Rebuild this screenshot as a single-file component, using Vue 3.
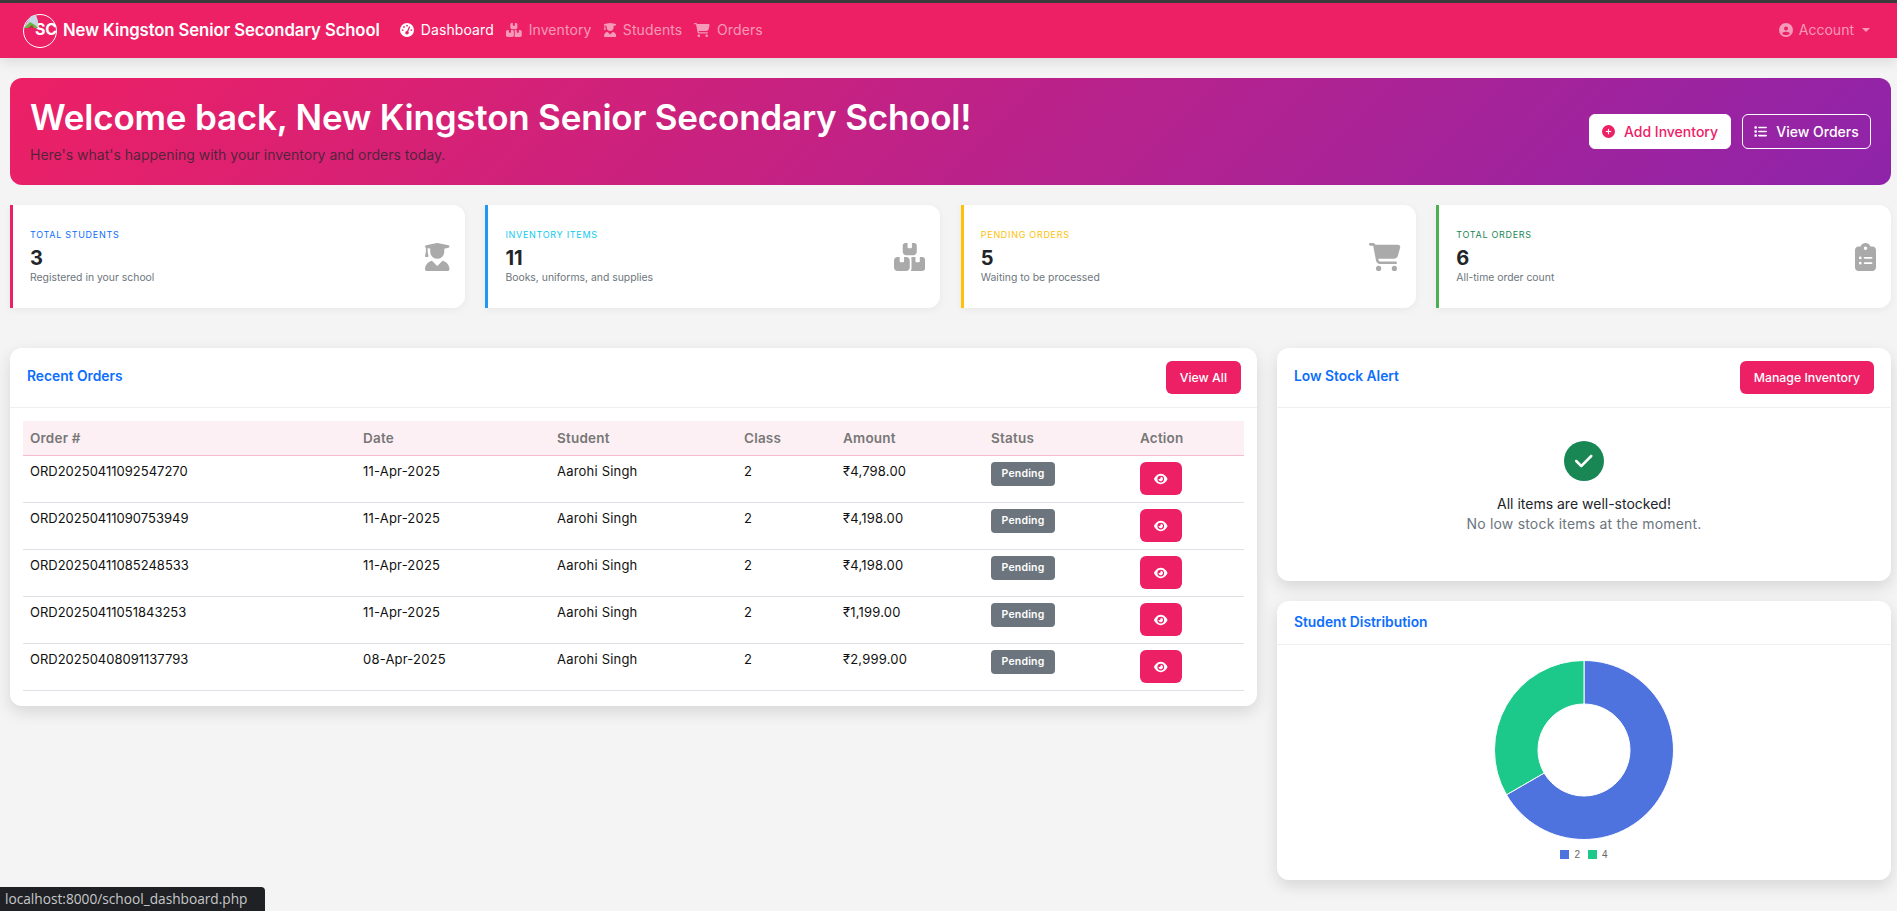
<template>
  <div class="page">
    <div class="topstrip"></div>
    <nav class="navbar">
      <a class="brand">
        <span class="logo">
          <svg class="logo-pic" viewBox="0 0 14 13">
            <path d="M0 12 L7 1 L12 0 L14 6 L14 13 L0 13Z" fill="#c9d6e8" />
            <path d="M0 13 L6 7 L11 10 L14 13Z" fill="#6cb33f" />
            <path d="M4 13 L8 10 L10 13Z" fill="#b3344a" />
          </svg>
          <span class="logo-text">SC</span>
        </span>
        New Kingston Senior Secondary School
      </a>
      <ul class="nav-links">
        <li v-for="link in navLinks" :key="link.label" :class="{ active: link.active }">
          <svg class="nav-icon" :viewBox="viewBox(link.icon)"><path :d="ICONS[link.icon].d" /></svg>
          {{ link.label }}
        </li>
      </ul>
      <div class="account">
        <svg class="nav-icon" :viewBox="viewBox('user')"><path :d="ICONS.user.d" /></svg>
        Account
        <span class="caret"></span>
      </div>
    </nav>

    <main class="content">
      <section class="hero">
        <div class="hero-text">
          <h1>Welcome back, New Kingston Senior Secondary School!</h1>
          <p>Here's what's happening with your inventory and orders today.</p>
        </div>
        <div class="hero-actions">
          <button class="btn-white">
            <svg :viewBox="viewBox('plus')"><path :d="ICONS.plus.d" /></svg>
            Add Inventory
          </button>
          <button class="btn-outline">
            <svg :viewBox="viewBox('list')"><path :d="ICONS.list.d" /></svg>
            View Orders
          </button>
        </div>
      </section>

      <section class="stats">
        <div v-for="s in stats" :key="s.label" class="stat" :style="{ borderLeftColor: s.border }">
          <div>
            <div class="stat-label" :style="{ color: s.color }">{{ s.label }}</div>
            <div class="stat-num">{{ s.value }}</div>
            <div class="stat-sub">{{ s.sub }}</div>
          </div>
          <svg class="stat-icon" :viewBox="viewBox(s.icon)"><path :d="ICONS[s.icon].d" /></svg>
        </div>
      </section>

      <section class="columns">
        <div class="card">
          <div class="card-head">
            <h2>Recent Orders</h2>
            <button class="btn-pink">View All</button>
          </div>
          <div class="orders-body">
            <table>
              <colgroup>
                <col v-for="w in colWidths" :key="w" :style="{ width: w + 'px' }" />
              </colgroup>
              <thead>
                <tr>
                  <th>Order #</th><th>Date</th><th>Student</th><th>Class</th><th>Amount</th><th>Status</th><th>Action</th>
                </tr>
              </thead>
              <tbody>
                <tr v-for="o in orders" :key="o.id">
                  <td class="order-id">{{ o.id }}</td>
                  <td>{{ o.date }}</td>
                  <td>Aarohi Singh</td>
                  <td>2</td>
                  <td>{{ o.amount }}</td>
                  <td><span class="badge">Pending</span></td>
                  <td>
                    <button class="btn-eye">
                      <svg :viewBox="viewBox('eye')"><path :d="ICONS.eye.d" /></svg>
                    </button>
                  </td>
                </tr>
              </tbody>
            </table>
          </div>
        </div>

        <div class="side">
          <div class="card">
            <div class="card-head">
              <h2>Low Stock Alert</h2>
              <button class="btn-pink">Manage Inventory</button>
            </div>
            <div class="stock-ok">
              <span class="check">
                <svg :viewBox="viewBox('check')"><path :d="ICONS.check.d" /></svg>
              </span>
              <div class="ok-title">All items are well-stocked!</div>
              <div class="ok-sub">No low stock items at the moment.</div>
            </div>
          </div>

          <div class="card">
            <div class="card-head small">
              <h2>Student Distribution</h2>
            </div>
            <div class="chart">
              <svg class="donut" viewBox="0 0 180 180">
                <path v-for="seg in segments" :key="seg.label" :d="seg.d" :fill="seg.color" stroke="#fff" stroke-width="1" />
              </svg>
              <div class="legend">
                <span v-for="seg in segments" :key="seg.label" class="legend-item">
                  <i :style="{ background: seg.color }"></i>{{ seg.label }}
                </span>
              </div>
            </div>
          </div>
        </div>
      </section>
    </main>

    <div class="status-bubble">localhost:8000/school_dashboard.php</div>
  </div>
</template>

<script setup>
const ICONS = {
  gauge: { w: 512, d: 'M0 256a256 256 0 1 1 512 0A256 256 0 1 1 0 256zM288 96a32 32 0 1 0 -64 0 32 32 0 1 0 64 0zM256 416c35.3 0 64-28.7 64-64c0-17.4-6.9-33.1-18.1-44.6L366 161.7c5.3-12.1-.2-26.3-12.3-31.6s-26.3 .2-31.6 12.3L257.9 288c-.6 0-1.3 0-1.9 0c-35.3 0-64 28.7-64 64s28.7 64 64 64zM176 144a32 32 0 1 0 -64 0 32 32 0 1 0 64 0zM96 288a32 32 0 1 0 0-64 32 32 0 1 0 0 64zm352-32a32 32 0 1 0 -64 0 32 32 0 1 0 64 0z' },
  boxes: { w: 576, d: 'M248 0H208c-26.5 0-48 21.5-48 48V160c0 35.3 28.7 64 64 64H352c35.3 0 64-28.7 64-64V48c0-26.5-21.5-48-48-48H328V80c0 8.8-7.2 16-16 16H264c-8.8 0-16-7.2-16-16V0zM64 256c-35.3 0-64 28.7-64 64V448c0 35.3 28.7 64 64 64H224c35.3 0 64-28.7 64-64V320c0-35.3-28.7-64-64-64H184v80c0 8.8-7.2 16-16 16H120c-8.8 0-16-7.2-16-16V256H64zM352 512H512c35.3 0 64-28.7 64-64V320c0-35.3-28.7-64-64-64H472v80c0 8.8-7.2 16-16 16H408c-8.8 0-16-7.2-16-16V256H352c-15 0-28.8 5.2-39.7 13.8c4.9 10.4 7.7 22 7.7 34.2V464c0 18-6 34.6-16 48h48z' },
  grad: { w: 448, d: 'M219.3 .5c3.1-.6 6.3-.6 9.4 0l200 40C439.9 42.7 448 52.6 448 64s-8.1 21.3-19.3 23.5L352 102.9V160c0 70.7-57.3 128-128 128s-128-57.3-128-128V102.9L48 93.3v65.1l15.7 78.4c.9 4.7-.3 9.6-3.3 13.3s-7.6 5.9-12.4 5.9H16c-4.8 0-9.3-2.1-12.4-5.9s-4.3-8.6-3.3-13.3L16 158.4V86.6C6.5 83.3 0 74.3 0 64C0 52.6 8.1 42.7 19.3 40.5l200-40zM111.9 327.7c10.5-3.4 21.8 .4 29.4 8.5l71 75.5c6.3 6.7 17 6.7 23.3 0l71-75.5c7.6-8.1 18.9-11.9 29.4-8.5C401 348.6 448 409.4 448 481.3c0 17-13.8 30.7-30.7 30.7H30.7C13.8 512 0 498.2 0 481.3c0-71.9 47-132.7 111.9-153.6z' },
  cart: { w: 576, d: 'M0 24C0 10.7 10.7 0 24 0H69.5c22 0 41.5 12.8 50.6 32h411c26.3 0 45.5 25 38.6 50.4l-41 152.3c-8.5 31.4-37 53.3-69.5 53.3H170.7l5.4 28.5c2.2 11.3 12.1 19.5 23.6 19.5H488c13.3 0 24 10.7 24 24s-10.7 24-24 24H199.7c-34.6 0-64.3-24.6-70.7-58.5L77.4 54.5c-.7-3.8-4-6.5-7.9-6.5H24C10.7 48 0 37.3 0 24zM128 464a48 48 0 1 1 96 0 48 48 0 1 1 -96 0zm336-48a48 48 0 1 1 0 96 48 48 0 1 1 0-96z' },
  clipboard: { w: 384, d: 'M192 0c-41.8 0-77.4 26.7-90.5 64H64C28.7 64 0 92.7 0 128V448c0 35.3 28.7 64 64 64H320c35.3 0 64-28.7 64-64V128c0-35.3-28.7-64-64-64H282.5C269.4 26.7 233.8 0 192 0zm0 64a32 32 0 1 1 0 64 32 32 0 1 1 0-64zM72 272a24 24 0 1 1 48 0 24 24 0 1 1 -48 0zm104-16H304c8.8 0 16 7.2 16 16s-7.2 16-16 16H176c-8.8 0-16-7.2-16-16s7.2-16 16-16zM72 368a24 24 0 1 1 48 0 24 24 0 1 1 -48 0zm88 0c0-8.8 7.2-16 16-16H304c8.8 0 16 7.2 16 16s-7.2 16-16 16H176c-8.8 0-16-7.2-16-16z' },
  user: { w: 512, d: 'M399 384.2C376.9 345.8 335.4 320 288 320H224c-47.4 0-88.9 25.8-111 64.2c35.2 39.2 86.2 63.8 143 63.8s107.8-24.7 143-63.8zM0 256a256 256 0 1 1 512 0A256 256 0 1 1 0 256zm256 16a72 72 0 1 0 0-144 72 72 0 1 0 0 144z' },
  plus: { w: 512, d: 'M256 512A256 256 0 1 0 256 0a256 256 0 1 0 0 512zM232 344V280H168c-13.3 0-24-10.7-24-24s10.7-24 24-24h64V168c0-13.3 10.7-24 24-24s24 10.7 24 24v64h64c13.3 0 24 10.7 24 24s-10.7 24-24 24H280v64c0 13.3-10.7 24-24 24s-24-10.7-24-24z' },
  list: { w: 512, d: 'M40 48C26.7 48 16 58.7 16 72v48c0 13.3 10.7 24 24 24H88c13.3 0 24-10.7 24-24V72c0-13.3-10.7-24-24-24H40zM192 64c-17.7 0-32 14.3-32 32s14.3 32 32 32H480c17.7 0 32-14.3 32-32s-14.3-32-32-32H192zm0 160c-17.7 0-32 14.3-32 32s14.3 32 32 32H480c17.7 0 32-14.3 32-32s-14.3-32-32-32H192zm0 160c-17.7 0-32 14.3-32 32s14.3 32 32 32H480c17.7 0 32-14.3 32-32s-14.3-32-32-32H192zM16 232v48c0 13.3 10.7 24 24 24H88c13.3 0 24-10.7 24-24V232c0-13.3-10.7-24-24-24H40c-13.3 0-24 10.7-24 24zM40 368c-13.3 0-24 10.7-24 24v48c0 13.3 10.7 24 24 24H88c13.3 0 24-10.7 24-24V392c0-13.3-10.7-24-24-24H40z' },
  eye: { w: 576, d: 'M288 32c-80.8 0-145.5 36.8-192.6 80.6C48.6 156 17.3 208 2.5 243.7c-3.3 7.9-3.3 16.7 0 24.6C17.3 304 48.6 356 95.4 399.4C142.5 443.2 207.2 480 288 480s145.5-36.8 192.6-80.6c46.8-43.5 78.1-95.4 92.9-131.1c3.3-7.9 3.3-16.7 0-24.6c-14.8-35.7-46.1-87.7-92.9-131.1C433.5 68.8 368.8 32 288 32zM144 256a144 144 0 1 1 288 0 144 144 0 1 1 -288 0zm144-64c0 35.3-28.7 64-64 64c-7.1 0-13.9-1.2-20.3-3.3c-5.5-1.8-11.9 1.6-11.7 7.4c.3 6.9 1.3 13.8 3.2 20.7c13.7 51.2 66.4 81.6 117.6 67.9s81.6-66.4 67.9-117.6c-11.1-41.5-47.8-69.4-88.6-71.1c-5.8-.2-9.2 6.1-7.4 11.7c2.1 6.4 3.3 13.2 3.3 20.3z' },
  check: { w: 448, d: 'M438.6 105.4c12.5 12.5 12.5 32.8 0 45.3l-256 256c-12.5 12.5-32.8 12.5-45.3 0l-128-128c-12.5-12.5-12.5-32.8 0-45.3s32.8-12.5 45.3 0L160 338.7 393.4 105.4c12.5-12.5 32.8-12.5 45.3 0z' },
}
const viewBox = (name) => `0 0 ${ICONS[name].w} 512`

const navLinks = [
  { label: 'Dashboard', icon: 'gauge', active: true },
  { label: 'Inventory', icon: 'boxes' },
  { label: 'Students', icon: 'grad' },
  { label: 'Orders', icon: 'cart' },
]

const stats = [
  { label: 'Total Students', value: 3, sub: 'Registered in your school', icon: 'grad', border: '#ed2065', color: '#0d6efd' },
  { label: 'Inventory Items', value: 11, sub: 'Books, uniforms, and supplies', icon: 'boxes', border: '#2196f3', color: '#0dcaf0' },
  { label: 'Pending Orders', value: 5, sub: 'Waiting to be processed', icon: 'cart', border: '#ffc107', color: '#ffc107' },
  { label: 'Total Orders', value: 6, sub: 'All-time order count', icon: 'clipboard', border: '#4caf50', color: '#198754' },
]

const colWidths = [333, 194, 187, 99, 148, 149, 111]

const orders = [
  { id: 'ORD20250411092547270', date: '11-Apr-2025', amount: '₹4,798.00' },
  { id: 'ORD20250411090753949', date: '11-Apr-2025', amount: '₹4,198.00' },
  { id: 'ORD20250411085248533', date: '11-Apr-2025', amount: '₹4,198.00' },
  { id: 'ORD20250411051843253', date: '11-Apr-2025', amount: '₹1,199.00' },
  { id: 'ORD20250408091137793', date: '08-Apr-2025', amount: '₹2,999.00' },
]

// doughnut slices, clockwise from 12 o'clock
function slice(from, to) {
  const R = 89.5, r = 46, c = 90
  const pt = (rad, deg) => {
    const a = (deg * Math.PI) / 180
    return `${(c + rad * Math.sin(a)).toFixed(2)} ${(c - rad * Math.cos(a)).toFixed(2)}`
  }
  const large = to - from > 180 ? 1 : 0
  return `M${pt(R, from)} A${R} ${R} 0 ${large} 1 ${pt(R, to)} L${pt(r, to)} A${r} ${r} 0 ${large} 0 ${pt(r, from)} Z`
}
const segments = [
  { label: '2', color: '#4e73df', d: slice(0, 240) },
  { label: '4', color: '#1cc88a', d: slice(240, 360) },
]
</script>

<style scoped>
.page {
  position: relative;
  min-height: 911px;
  background: #f4f4f4;
  font-family: Inter, "Liberation Sans", sans-serif;
  color: #212529;
  overflow: hidden;
}
.topstrip { height: 3px; background: #3c3c3c; }
.navbar {
  display: flex;
  align-items: center;
  height: 55px;
  box-sizing: border-box;
  padding: 0 27px 2px 23px;
  background: #ed2065;
  box-shadow: 0 4px 12px rgba(0,0,0,0.1);
  position: relative;
}
.brand {
  display: flex;
  align-items: center;
  gap: 6px;
  color: #fff;
  font-size: 16.7px;
  font-weight: 600;
  letter-spacing: -0.1px;
  white-space: nowrap;
}
.logo {
  position: relative;
  top: 1px;
  display: flex;
  align-items: center;
  justify-content: flex-end;
  width: 34px;
  height: 34px;
  box-sizing: border-box;
  border: 1px solid #fff;
  border-radius: 50%;
}
.logo-pic { position: absolute; left: 0; top: 0; width: 14px; height: 13px; }
.logo-text { font-size: 16px; font-weight: 700; margin-right: -1px; margin-top: -3px; }
.nav-links {
  display: flex;
  gap: 12px;
  list-style: none;
  margin: 0 0 0 20px;
  padding: 0;
}
.nav-links li {
  display: flex;
  align-items: center;
  gap: 7px;
  color: rgba(255,255,255,0.55);
  font-size: 14px;
  letter-spacing: 0.1px;
}
.nav-links li.active { color: #fff; }
.nav-icon { height: 14px; fill: currentColor; flex-shrink: 0; }
.account {
  margin-left: auto;
  display: flex;
  align-items: center;
  gap: 6px;
  color: rgba(255,255,255,0.55);
  font-size: 14px;
}
.caret {
  margin-left: 2px;
  border-top: 4px solid currentColor;
  border-left: 4px solid transparent;
  border-right: 4px solid transparent;
}
.content { padding: 20px 6px 0 10px; }
.hero {
  display: flex;
  align-items: center;
  justify-content: space-between;
  height: 107px;
  box-sizing: border-box;
  padding: 0 20px;
  border-radius: 12px;
  background: linear-gradient(135deg, #ed2065, #8e24aa);
}
.hero-text { margin-top: -2px; }
.hero h1 {
  margin: 0;
  color: #fff;
  font-size: 35px;
  line-height: 42px;
  font-weight: 600;
  letter-spacing: -0.2px;
}
.hero p {
  margin: 6px 0 0;
  font-size: 14px;
  line-height: 21px;
  color: rgba(33,37,41,0.75);
}
.hero-actions { display: flex; gap: 11px; }
.hero-actions button {
  display: flex;
  align-items: center;
  justify-content: center;
  gap: 9px;
  height: 35px;
  box-sizing: border-box;
  border-radius: 6px;
  font: 500 14px Inter, sans-serif;
}
.hero-actions svg { height: 13px; fill: currentColor; }
.btn-white { width: 142px; background: #fff; border: 1px solid #fff; color: #ed2065; }
.btn-outline { width: 129px; background: transparent; border: 1px solid #fff; color: #fff; }

.stats {
  display: grid;
  grid-template-columns: repeat(4, 1fr);
  gap: 20.67px;
  margin-top: 20px;
}
.stat {
  display: flex;
  align-items: center;
  justify-content: space-between;
  height: 103px;
  box-sizing: border-box;
  padding: 0 15px 0 17px;
  background: #fff;
  border-left: 3px solid;
  border-radius: 0 12px 12px 0;
  box-shadow: 0 2px 8px rgba(0,0,0,0.05);
}
.stat-label {
  font-size: 9px;
  line-height: 12px;
  text-transform: uppercase;
  letter-spacing: 0.7px;
  margin-bottom: 4px;
}
.stat-num {
  font-size: 20px;
  line-height: 26px;
  font-weight: 700;
}
.stat-sub {
  font-size: 10.4px;
  line-height: 14px;
  color: #6c757d;
}
.stat-icon { height: 28px; fill: #aaa; }

.columns {
  display: grid;
  grid-template-columns: 1247px 614px;
  gap: 20px;
  margin-top: 40px;
  align-items: start;
}
.card {
  background: #fff;
  border-radius: 12px;
  box-shadow: 0 6px 16px rgba(0,0,0,0.12);
}
.side { display: flex; flex-direction: column; gap: 20px; }
.card-head {
  display: flex;
  align-items: center;
  justify-content: space-between;
  height: 60px;
  box-sizing: border-box;
  padding: 0 16px 3px 17px;
  border-bottom: 1px solid #f0f0f2;
}
.side .card-head { padding-right: 17px; }
.card-head.small { height: 44px; padding-bottom: 2px; }
.card-head h2 {
  margin: 0;
  font-size: 13.8px;
  font-weight: 600;
  color: #0d6efd;
}
.btn-pink {
  height: 33px;
  margin-top: 3px;
  padding: 0 14px;
  border: none;
  border-radius: 6px;
  background: #ed2065;
  color: #fff;
  font: 500 12.3px Inter, sans-serif;
}
.orders-body { padding: 13px 13px 15px; }
table {
  width: 1221px;
  table-layout: fixed;
  border-collapse: collapse;
  font-size: 13px;
}
th {
  height: 34px;
  padding: 0 7px;
  text-align: left;
  font-weight: 600;
  font-size: 13.5px;
  letter-spacing: 0.2px;
  color: #777;
  background: #fdf0f4;
  border-bottom: 1px solid #f6bccd;
}
td {
  height: 46px;
  box-sizing: border-box;
  padding: 6px 7px 7px;
  vertical-align: top;
  line-height: 19px;
  letter-spacing: 0.2px;
  color: #111;
  border-bottom: 1px solid #dee2e6;
  white-space: nowrap;
}
td.order-id { letter-spacing: 0; }
.badge {
  display: block;
  width: 64px;
  height: 24px;
  line-height: 23px;
  text-align: center;
  border-radius: 4px;
  background: #6c757d;
  color: #fff;
  font-size: 10.5px;
  font-weight: 600;
}
.btn-eye {
  display: flex;
  align-items: center;
  justify-content: center;
  width: 42px;
  height: 33px;
  border: none;
  border-radius: 6px;
  background: #ed2065;
}
.btn-eye svg { height: 12px; fill: #fff; }
.stock-ok {
  display: flex;
  flex-direction: column;
  align-items: center;
  height: 173px;
  box-sizing: border-box;
  padding-top: 33px;
}
.check {
  display: flex;
  align-items: center;
  justify-content: center;
  width: 40px;
  height: 40px;
  margin-bottom: 13px;
  border-radius: 50%;
  background: #198754;
}
.check svg { height: 20px; fill: #fff; }
.ok-title { font-size: 14px; line-height: 20px; color: #212529; }
.ok-sub { font-size: 14px; letter-spacing: 0.2px; line-height: 20px; color: #6c757d; }
.chart {
  display: flex;
  flex-direction: column;
  align-items: center;
  height: 235px;
  box-sizing: border-box;
  padding-top: 15px;
}
.donut { width: 180px; height: 180px; display: block; }
.legend {
  display: flex;
  gap: 8px;
  margin-top: 9px;
  font: 10px "Liberation Sans", sans-serif;
  color: #666;
}
.legend-item { display: flex; align-items: center; gap: 5px; }
.legend-item i { width: 9px; height: 9px; display: block; }
.status-bubble {
  position: absolute;
  left: 0;
  bottom: 0;
  width: 265px;
  height: 24px;
  box-sizing: border-box;
  padding-left: 5px;
  line-height: 24px;
  font-family: "Open Sans", sans-serif;
  font-size: 13.7px;
  color: #c6c8ca;
  background: #202124;
  border-top-right-radius: 4px;
  white-space: nowrap;
}
</style>

<style>
html, body { margin: 0; background: #f4f4f4; }
</style>
